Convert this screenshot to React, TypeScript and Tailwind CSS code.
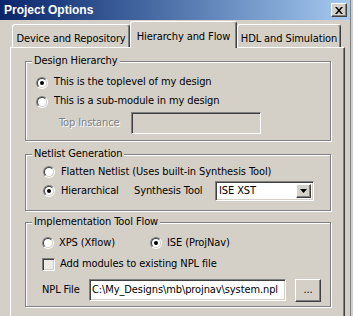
import React from 'react';

const sunken =
  'border border-t-[#808080] border-l-[#808080] border-r-white border-b-white shadow-[inset_1px_1px_0_#404040,inset_-1px_-1px_0_#d4d0c8]';
const raised =
  'border border-t-white border-l-white border-r-[#404040] border-b-[#404040] shadow-[inset_-1px_-1px_0_#808080]';

const Radio: React.FC<{ checked?: boolean }> = ({ checked }) => (
  <div className="w-[12px] h-[12px] shrink-0 rounded-full border border-t-[#808080] border-l-[#808080] border-r-white border-b-white">
    <div className="w-full h-full rounded-full border border-t-[#404040] border-l-[#404040] border-r-[#d4d0c8] border-b-[#d4d0c8] bg-white flex items-center justify-center">
      {checked && <div className="w-[4px] h-[4px] rounded-full bg-black" />}
    </div>
  </div>
);

const Group: React.FC<{ title: string; className: string; children: React.ReactNode }> = ({ title, className, children }) => (
  <div
    className={`relative ml-[14px] w-[306px] border border-[#808080] shadow-[inset_1px_1px_0_#fff,1px_1px_0_#fff] ${className}`}
  >
    <span className="absolute -top-[8px] left-[6px] px-[2px] bg-[#d4d0c8] leading-[13px]">{title}</span>
    {children}
  </div>
);

const Tab: React.FC<{ label: string; active?: boolean; width: string }> = ({ label, active, width }) => (
  <div
    className={`${width} flex justify-center rounded-t-[3px] border-t border-l border-t-white border-l-white border-r border-r-[#404040] shadow-[inset_-1px_0_0_#808080] bg-[#d4d0c8] ${
      active ? 'h-[27px] -mb-[1px] relative z-10 pt-[8px]' : 'h-[23px] pt-[7px]'
    }`}
  >
    <span className="leading-[13px]">{label}</span>
  </div>
);

export default function App() {
  return (
    <div className="w-[353px] h-[316px] overflow-hidden bg-[#d4d0c8] text-[11px] tracking-[-0.1px] text-black font-['DejaVu_Sans_Condensed','Liberation_Sans',sans-serif]">
      <div className="w-[351px] h-full border-r border-[#808080] flex flex-col">
        {/* title bar */}
        <div className="h-[20px] shrink-0 flex items-center justify-between pl-[4px] pr-[3px] bg-gradient-to-r from-[#0a246a] to-[#a6caf0]">
          <span className="text-white font-bold text-[12px] leading-[14px] tracking-normal font-['Liberation_Sans',Arial,sans-serif]">Project Options</span>
          <div className={`w-[16px] h-[14px] bg-[#d4d0c8] flex items-center justify-center ${raised}`}>
            <svg width="8" height="7" viewBox="0 0 8 7">
              <path d="M0 0h2l2 2.5L6 0h2L5 3.5 8 7H6L4 4.5 2 7H0l3-3.5z" fill="#000" />
            </svg>
          </div>
        </div>

        <div className="flex-1 pl-[10px] pt-[1px] flex flex-col">
          {/* tabs */}
          <div className="h-[26px] flex items-end pl-[2px]">
            <Tab label="Device and Repository" width="w-[118px]" />
            <Tab label="Hierarchy and Flow" width="w-[107px]" active />
            <Tab label="HDL and Simulation" width="w-[104px]" />
          </div>

          {/* panel */}
          <div className="w-[335px] flex-1 border-t border-l border-white border-r border-r-[#404040] shadow-[inset_-1px_0_0_#808080] pt-[13px] flex flex-col">
            <Group title="Design Hierarchy" className="h-[80px] pl-[10px] pt-[11px]">
              <div className="h-[19px] flex items-center">
                <Radio checked />
                <span className="ml-[6px]">This is the toplevel of my design</span>
              </div>
              <div className="h-[19px] flex items-center">
                <Radio />
                <span className="ml-[6px]">This is a sub-module in my design</span>
              </div>
              <div className="mt-[1px] h-[22px] flex items-center">
                <span className="ml-[23px] w-[72px] text-[#808080] [text-shadow:1px_1px_0_#fff]">Top Instance</span>
                <div className={`w-[130px] h-[22px] bg-[#d4d0c8] ${sunken}`} />
              </div>
            </Group>

            <Group title="Netlist Generation" className="mt-[13px] h-[57px] pl-[17px] pt-[8px]">
              <div className="h-[18px] flex items-center">
                <Radio />
                <span className="ml-[6px]">Flatten Netlist (Uses built-in Synthesis Tool)</span>
              </div>
              <div className="h-[20px] flex items-center">
                <div className="w-[91px] flex items-center">
                  <Radio checked />
                  <span className="ml-[6px]">Hierarchical</span>
                </div>
                <span className="w-[81px]">Synthesis Tool</span>
                <div className={`w-[99px] h-[20px] bg-white flex items-center justify-between pl-[3px] pr-[2px] ${sunken}`}>
                  <span>ISE XST</span>
                  <div className={`w-[15px] h-[14px] bg-[#d4d0c8] flex items-center justify-center ${raised}`}>
                    <svg width="7" height="4" viewBox="0 0 7 4">
                      <path d="M0 0h7L3.5 4z" fill="#000" />
                    </svg>
                  </div>
                </div>
              </div>
            </Group>

            <Group title="Implementation Tool Flow" className="mt-[11px] h-[85px] pl-[16px] pt-[10px]">
              <div className="h-[20px] flex items-center">
                <div className="w-[108px] flex items-center">
                  <Radio />
                  <span className="ml-[5px]">XPS (Xflow)</span>
                </div>
                <Radio checked />
                <span className="ml-[5px]">ISE (ProjNav)</span>
              </div>
              <div className="h-[23px] flex items-center">
                <div className={`w-[13px] h-[13px] bg-[#ecebe6] ${sunken}`} />
                <span className="ml-[5px]">Add modules to existing NPL file</span>
              </div>
              <div className="mt-[2px] h-[24px] flex items-center">
                <span className="w-[47px]">NPL File</span>
                <div className={`w-[197px] h-[22px] bg-white flex items-center pl-[2px] ${sunken}`}>
                  <span>C:\My_Designs\mb\projnav\system.npl</span>
                </div>
                <div className={`ml-[9px] w-[26px] h-[23px] flex items-center justify-center ${raised}`}>
                  <span className="leading-[10px]">...</span>
                </div>
              </div>
            </Group>
          </div>
        </div>
      </div>
    </div>
  );
}
